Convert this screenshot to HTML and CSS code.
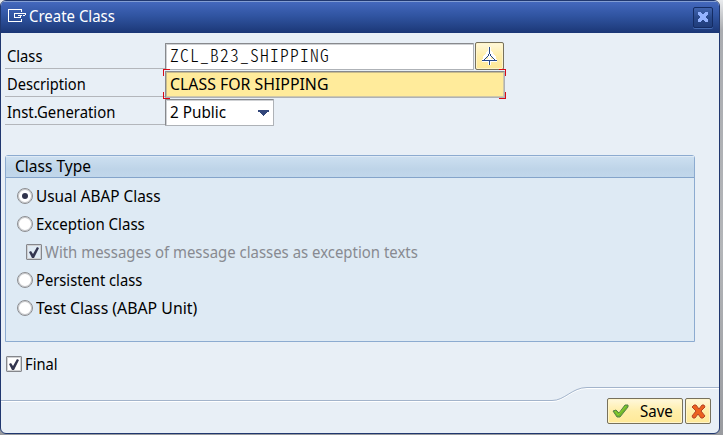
FILE: index.html
```html
<!DOCTYPE html>
<html lang="en">
<head>
<meta charset="utf-8">
<title>Create Class</title>
<link rel="stylesheet" href="styles.css">
</head>
<body>
<main class="dialog">
  <header class="titlebar">
    <svg class="title-icon" width="18" height="14" viewBox="0 0 18 14" fill="none" stroke="#fff" shape-rendering="crispEdges"><path d="M13 3V.5H.5v12H13V10M6.5 9V4.5H18M6 8.5h6M10 6.5h4M12.5 9V7M17.5 4v2M15 6.5h2"/></svg>
    <h1><span class="t create">Create Class</span></h1>
    <button class="close" aria-label="Close"><svg width="10" height="10" viewBox="0 0 10 10" fill="#94b3ff"><path d="M0 0h3v1h1v1h2V1h1V0h3v3H9v1H8v2h1v1h1v3H7V9H6V8H4v1H3v1H0V7h1V6h1V4H1V3H0z"/></svg></button>
  </header>
  <section class="form">
    <div class="row"><label><span class="t class">Class</span></label><div class="field name"><span class="mono">ZCL_B23_SHIPPING</span></div>
      <button class="picker" aria-label="Pattern"><svg width="16" height="20" viewBox="0 0 16 20" fill="none" shape-rendering="crispEdges"><path d="M8.5 1v18M1 14.5h15M2.5 13l5-7h2l5 7" stroke="#fff" stroke-width="3"/><path d="M8.5 1v7M8.5 15v4M1 14.5h15M7.5 8v2M9.5 8v2M6.5 10v1M10.5 10v1M5 11.5h1M11 11.5h1M4 12.5h1M12 12.5h1M3 13.5h1M13 13.5h1" stroke="#294988"/></svg></button></div>
    <div class="row"><label><span class="t description">Description</span></label><div class="field active"><span class="t shipping">CLASS FOR SHIPPING</span><svg class="focus" width="343" height="30" viewBox="0 0 343 30" fill="none" stroke="#d90a16" shape-rendering="crispEdges"><path d="M.5 7V.5H7M336 .5h6.5V7M.5 23v6.5H7M336 29.5h6.5V23"/></svg></div></div>
    <div class="row"><label><span class="t generation">Inst.Generation</span></label><div class="field select"><span class="t public">2 Public</span><svg width="11" height="6" viewBox="0 0 11 6"><path d="M0 0h11v2H9v1H8v1H7v1H6v1H5V5H4V4H3V3H2V2H0z" fill="#33477b"/></svg></div></div>
  </section>
  <section class="panel">
    <h2><span class="t type">Class Type</span></h2>
    <div class="options">
      <div class="option"><i class="radio on"></i><span class="t usual">Usual ABAP Class</span></div>
      <div class="option"><i class="radio"></i><span class="t exception">Exception Class</span></div>
      <div class="option nested"><i class="check off"><svg width="10" height="11" viewBox="0 0 10 11"><path d="M0 5l2-1 2 3L8 0l2 1-5 10H3z" fill="#343650"/></svg></i><span class="t messages">With messages of message classes as exception texts</span></div>
      <div class="option"><i class="radio"></i><span class="t persistent">Persistent class</span></div>
      <div class="option"><i class="radio"></i><span class="t test">Test Class (ABAP Unit)</span></div>
    </div>
  </section>
  <div class="option final-row"><i class="check"><svg width="10" height="11" viewBox="0 0 10 11"><path d="M0 5l2-1 2 3L8 0l2 1-5 10H3z" fill="#343650"/></svg></i><span class="t final">Final</span></div>
  <footer>
    <svg class="divider" width="718" height="16" viewBox="0 0 718 16" fill="none"><path d="M0 14.5H551C564 14.5 571 1.5 586 1.5H718" stroke="#fff"/><path d="M0 13.5H551C564 13.5 571 .5 586 .5H718" stroke="#a3b4cb"/></svg>
    <div class="actions">
      <button class="save"><svg width="17" height="14" viewBox="0 0 17 14"><path d="M1 7l3-1 3 3 6-8h3v2L8 13H5z" fill="#71b52b" stroke="#54824a"/><path d="M3 7l3 4 8-9" fill="none" stroke="#8bd52f"/></svg><span class="t save-text">Save</span></button>
      <button class="cancel" aria-label="Cancel"><svg width="15" height="15" viewBox="0 0 15 15"><path d="M1 3l2-2h2l3 4 3-4h2l1 2-4 4 4 5-2 2h-2l-3-4-3 4H2l-1-2 4-5z" fill="#ec601e" stroke="#b44328"/></svg></button>
    </div>
  </footer>
</main>
</body>
</html>
```

FILE: styles.css
```css
* { box-sizing: border-box; }
body { margin: 0; width: 723px; height: 435px; overflow: hidden; background: linear-gradient(#e9ebee, #aaacb0 30px, #b3b5b8 250px, #999b9f); font: 16px/20px "Noto Sans", sans-serif; color: #000; }
h1, h2 { margin: 0; font: inherit; }
button { padding: 0; font: inherit; color: inherit; }
svg { display: block; flex: none; }
.dialog { width: 720px; height: 434px; border: 1px solid #20376f; border-radius: 6px; background: #e8eff6; overflow: hidden; display: flex; flex-direction: column; }
.titlebar { height: 32px; flex: none; display: flex; align-items: center; padding: 0 6px 0 7px; border-top: 1px solid #839ed3; background: linear-gradient(#4468bd, #3054a1 45%, #234286 80%, #1b3675); color: #fff; }
.titlebar h1 { flex: 1; margin: -3px 0 0 3px; }
.title-icon { margin-top: -3px; }
.t { display: inline-block; white-space: nowrap; transform-origin: 0 50%; transform: scaleX(.9); }
.create { transform: scaleX(.935); }
.class { transform: scaleX(.92); }
.description { transform: scaleX(.915); }
.generation { transform: scaleX(.93); }
.shipping { transform: scaleX(.99); }
.public { transform: scaleX(.955); }
.type { transform: scaleX(.97); }
.usual { transform: scaleX(.96); }
.exception { transform: scaleX(.94); }
.messages { transform: scaleX(.933); }
.persistent { transform: scaleX(.92); }
.test { transform: scaleX(.99); }
.final { transform: scaleX(.92); }
.save-text { transform: scaleX(.94); }
.close { width: 20px; height: 21px; display: grid; place-items: center; border: 1px solid #142c64; border-radius: 2px; background: linear-gradient(#4164af, #29498c 50%, #203d7b); box-shadow: 0 1px #456bb2; margin-top: -1px; }
.form { margin-top: 8px; }
.row { height: 28px; display: flex; align-items: center; }
.row label { width: 160px; height: 28px; margin-left: 4px; padding: 5px 0 0 2px; border-bottom: 1px solid #b3b6bb; }
.field { height: 27px; margin-top: 3px; padding: 2px 0 0 4px; border: 1px solid #aeb2b7; border-top-color: #87898d; border-left-color: #87898d; box-shadow: inset 1px 1px #cfd1d4; border-radius: 1px; background: #fff; position: relative; }
.name { width: 309px; margin-right: 1px; }
.mono { display: block; font: 300 17.5px/18px "Noto Sans CJK KR", monospace; font-feature-settings: "hwid"; letter-spacing: 1.25px; white-space: nowrap; }
.active { width: 340px; background: #ffeb9b; box-shadow: inset 1px 1px #c8bb8c, inset -1px -1px #cfc7a8; }
.focus { position: absolute; left: -3px; top: -3px; }
.select { width: 109px; }
.select svg { position: absolute; right: 4px; top: 10px; }
.picker, .save, .cancel { display: flex; align-items: center; border: 1px solid #77715c; border-radius: 2px; background: linear-gradient(#fff8dc, #ffeeaa 50%, #ffe997); box-shadow: inset 0 0 0 1px #fff5ca; }
.picker { width: 29px; height: 28px; margin: 2px 0 0; padding-left: 5px; }
.panel { width: 690px; height: 187px; margin: 30px 0 0 4px; flex: none; border: 1px solid #8cabd0; border-radius: 3px 3px 0 0; background: #deeaf4; }
.panel h2 { height: 22px; padding: 0 0 0 9px; line-height: 18px; border-bottom: 1px solid #84a4ca; background: linear-gradient(#ccdff0, #bed4e8 60%, #c1d7eb); border-top: 1px solid #dfeaf5; }
.options { padding: 4px 0 0 11px; }
.option { height: 28px; display: flex; align-items: center; gap: 3px; }
.nested { margin-left: 9px; color: #888a91; }
.radio, .check { flex: none; display: grid; place-items: center; width: 16px; height: 16px; border: 1px solid #85878c; background: #fff; box-shadow: inset 0 0 0 1px #d0d1d3; }
.radio { border-radius: 50%; border-color: #8b8d91; box-shadow: inset 0 0 0 1px #c5c7ca; }
.on::after { content: ""; width: 6px; height: 6px; border-radius: 50%; background: #30334c; }
.check { border-radius: 1px; }
.off { background: #e0ebf4; }
.final-row { margin: 8px 0 0 5px; flex: none; }
footer { position: relative; height: 56px; margin-top: 9px; }
.divider { position: absolute; left: 0; top: 0; }
.actions { position: relative; display: flex; justify-content: flex-end; gap: 2px; padding: 11px 8px 0 0; }
.save { width: 76px; height: 26px; padding-left: 4px; gap: 11px; }
.cancel { width: 26px; height: 26px; justify-content: center; }
```
